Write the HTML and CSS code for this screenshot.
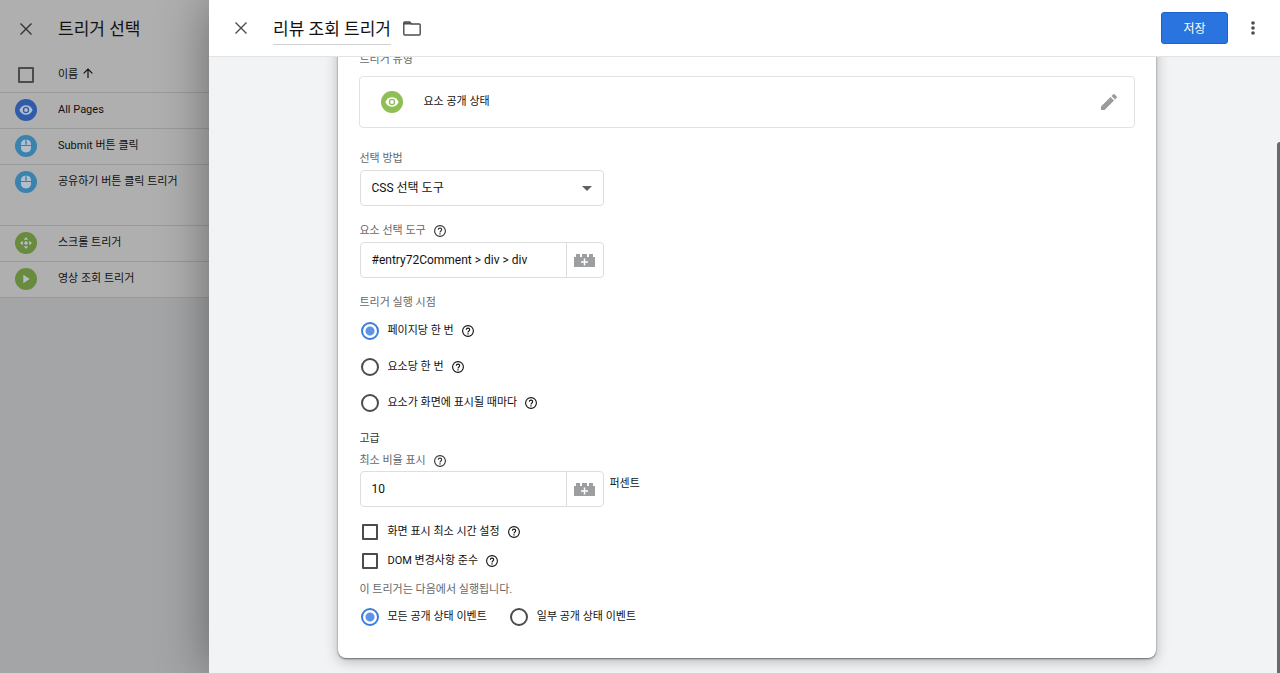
FILE: index.html
```html
<!DOCTYPE html>
<html lang="ko">
<head>
    <meta charset="UTF-8">
    <meta name="viewport" content="width=device-width, initial-scale=1.0">
    <title>리뷰 조회 트리거</title>
    <link rel="stylesheet" href="styles.css">
</head>
<body>

<!-- shared icons -->
<svg class="symbols" aria-hidden="true">
    <symbol id="close" viewBox="0 0 14 14">
        <path d="M1.5 1.5l11 11M12.5 1.5l-11 11" fill="none" stroke="currentColor" stroke-width="1.4"/>
    </symbol>
    <symbol id="help" viewBox="0 0 12 12">
        <circle cx="6" cy="6" r="5.4" fill="none" stroke="currentColor" stroke-width="1.1"/>
        <path d="M4.3 4.8c0-2.2 3.4-2.2 3.4 0 0 1.2-1.7 1.3-1.7 2.6" fill="none" stroke="currentColor" stroke-width="1.1"/>
        <path d="M5.4 8.2h1.2v1.2H5.4z" fill="currentColor"/>
    </symbol>
    <symbol id="eye" viewBox="0 0 22 22">
        <path d="M11 6.2c-3 0-5.500 1.900-6.600 4.800 1.100 2.900 3.600 4.800 6.600 4.800s5.500-1.900 6.600-4.800C16.500 8.100 14 6.200 11 6.200z" fill="currentColor"/>
        <circle class="icon-hole" cx="11" cy="11" r="3.200"/>
        <circle cx="11" cy="11" r="1.900" fill="currentColor"/>
    </symbol>
    <symbol id="mouse" viewBox="0 0 22 22">
        <path d="M10.500 4.500v5.500H6V9c0-2.500 2-4.400 4.500-4.500zM11.500 4.500C14 4.600 16 6.500 16 9v1h-4.500zM6 11h10v1.800c0 2.800-2.200 4.700-5 4.700s-5-1.900-5-4.700z" fill="currentColor"/>
        <path class="icon-wheel" d="M11 6.300v2.600"/>
    </symbol>
    <symbol id="scroll" viewBox="0 0 22 22">
        <circle cx="11" cy="11" r="1.800" fill="currentColor"/>
        <path d="M11 5l2.200 2.800H8.800zM11 17l2.200-2.800H8.800zM5 11l2.800-2.200v4.400zM17 11l-2.800-2.200v4.400z" fill="currentColor"/>
    </symbol>
    <symbol id="play" viewBox="0 0 22 22">
        <path d="M8.300 6.800v8.400l6.400-4.200z" fill="currentColor"/>
    </symbol>
    <symbol id="brick" viewBox="0 0 21 13">
        <path d="M0 3h2V0h4v3h2V0h5v3h2V0h4v3h2v10H0z" fill="currentColor"/>
        <path d="M10.500 4.500v7M7 8h7" stroke="#fff" stroke-width="1.500"/>
    </symbol>
</svg>

<div class="app">
    <aside class="picker">
        <header class="picker-header">
            <button class="icon-button" aria-label="닫기"><svg class="icon-close"><use href="#close"/></svg></button>
            <h2>트리거 선택</h2>
        </header>
        <table class="trigger-table">
            <thead>
                <tr>
                    <th class="icon-cell"><input type="checkbox" aria-label="모두 선택"></th>
                    <th>이름 <svg class="icon-sort" viewBox="0 0 10 10"><path d="M5 10V1M.7 5.300L5 1l4.300 4.300" fill="none" stroke="currentColor" stroke-width="1.200"/></svg></th>
                </tr>
            </thead>
            <tbody>
                <tr>
                    <td class="icon-cell"><svg class="badge blue"><use href="#eye"/></svg></td>
                    <td>All Pages</td>
                </tr>
                <tr>
                    <td class="icon-cell"><svg class="badge sky"><use href="#mouse"/></svg></td>
                    <td>Submit 버튼 클릭</td>
                </tr>
                <tr class="tall">
                    <td class="icon-cell"><svg class="badge sky"><use href="#mouse"/></svg></td>
                    <td>공유하기 버튼 클릭 트리거</td>
                </tr>
                <tr>
                    <td class="icon-cell"><svg class="badge olive"><use href="#scroll"/></svg></td>
                    <td>스크롤 트리거</td>
                </tr>
                <tr>
                    <td class="icon-cell"><svg class="badge olive"><use href="#play"/></svg></td>
                    <td>영상 조회 트리거</td>
                </tr>
            </tbody>
        </table>
    </aside>

    <main class="sheet">
        <header class="sheet-header">
            <button class="icon-button" aria-label="닫기"><svg class="icon-close"><use href="#close"/></svg></button>
            <h1>리뷰 조회 트리거</h1>
            <button class="icon-button folder" aria-label="폴더">
                <svg class="icon-folder" viewBox="0 0 18 15"><path d="M1.700 1h5l1.800 2h7.800q.9 0 .9.900v9.200q0 .9-.9.900H1.700q-.9 0-.9-.9V1.900Q.8 1 1.700 1z" fill="none" stroke="currentColor" stroke-width="1.400"/><path d="M1 1.500h6l1.500 2H1z" fill="currentColor"/></svg>
            </button>
            <button class="save">저장</button>
            <button class="icon-button" aria-label="더보기">
                <svg class="icon-more" viewBox="0 0 4 14"><circle cx="2" cy="2" r="1.800"/><circle cx="2" cy="7" r="1.800"/><circle cx="2" cy="12" r="1.800"/></svg>
            </button>
        </header>

        <div class="sheet-body">
            <form class="card">
                <p class="label">트리거 유형</p>
                <div class="trigger-type">
                    <svg class="badge green"><use href="#eye"/></svg>
                    <span>요소 공개 상태</span>
                    <button type="button" class="icon-button edit" aria-label="수정">
                        <svg class="icon-edit" viewBox="0 0 18 18"><path d="M1 13.500V17h3.500L14 7.500 10.500 4zM11.500 3L15 6.500l1.700-1.700q.6-.6 0-1.200l-2.300-2.300q-.6-.6-1.200 0z" fill="currentColor"/></svg>
                    </button>
                </div>

                <label class="label" for="method">선택 방법</label>
                <div class="select">
                    <select id="method"><option>CSS 선택 도구</option></select>
                    <svg class="icon-arrow" viewBox="0 0 10 5"><path d="M0 0h10L5 5z" fill="currentColor"/></svg>
                </div>

                <label class="label" for="selector">요소 선택 도구 <svg class="help"><use href="#help"/></svg></label>
                <div class="variable-input">
                    <input type="text" id="selector" value="#entry72Comment &gt; div &gt; div">
                    <button type="button" aria-label="변수 추가"><svg class="icon-brick"><use href="#brick"/></svg></button>
                </div>

                <p class="label">트리거 실행 시점</p>
                <label class="choice"><input type="radio" name="when" checked>페이지당 한 번 <svg class="help"><use href="#help"/></svg></label>
                <label class="choice"><input type="radio" name="when">요소당 한 번 <svg class="help"><use href="#help"/></svg></label>
                <label class="choice"><input type="radio" name="when">요소가 화면에 표시될 때마다 <svg class="help"><use href="#help"/></svg></label>

                <h3>고급</h3>
                <label class="label ratio-label" for="ratio">최소 비율 표시 <svg class="help"><use href="#help"/></svg></label>
                <div class="ratio">
                    <div class="variable-input">
                        <input type="text" id="ratio" value="10">
                        <button type="button" aria-label="변수 추가"><svg class="icon-brick"><use href="#brick"/></svg></button>
                    </div>
                    <span>퍼센트</span>
                </div>

                <div class="checks">
                    <label class="choice"><input type="checkbox">화면 표시 최소 시간 설정 <svg class="help"><use href="#help"/></svg></label>
                    <label class="choice"><input type="checkbox">DOM 변경사항 준수 <svg class="help"><use href="#help"/></svg></label>
                </div>

                <p class="label fires-on">이 트리거는 다음에서 실행됩니다.</p>
                <div class="events">
                    <label class="choice"><input type="radio" name="events" checked>모든 공개 상태 이벤트</label>
                    <label class="choice"><input type="radio" name="events">일부 공개 상태 이벤트</label>
                </div>
            </form>
        </div>
        <div class="scrollbar"></div>
    </main>
</div>

</body>
</html>
```
FILE: styles.css
```css
* {
    box-sizing: border-box;
}
body {
    margin: 0;
    font-family: Roboto, "Noto Sans CJK KR", sans-serif;
    font-size: 12px;
    line-height: 16px;
    color: #111;
}
h1, h2, h3, p {
    margin: 0;
    font-weight: normal;
}
button, input, select {
    font: inherit;
    color: inherit;
    margin: 0;
}
svg {
    display: block;
    flex: none;
}
.symbols {
    position: absolute;
    width: 0;
    height: 0;
}
.app {
    display: grid;
    grid-template-columns: 209px 1fr;
    height: 100vh;
    overflow: hidden;
}

/* Icons */
.icon-button {
    display: flex;
    align-items: center;
    justify-content: center;
    padding: 0;
    border: none;
    background: none;
    color: #4a4c4f;
    cursor: pointer;
}
.icon-close {
    width: 14px;
    height: 14px;
}
.icon-sort {
    display: inline-block;
    width: 10px;
    height: 10px;
    margin-left: 2px;
}
.icon-folder {
    width: 18px;
    height: 15px;
}
.icon-more {
    width: 4px;
    height: 14px;
    fill: currentColor;
}
.icon-edit {
    width: 18px;
    height: 18px;
}
.icon-brick {
    width: 21px;
    height: 13px;
}
.help {
    width: 12px;
    height: 12px;
}
.badge {
    width: 22px;
    height: 22px;
    border-radius: 50%;
    background: var(--badge);
    color: #b3bdcc;
}
.icon-hole {
    fill: var(--badge);
}
.icon-wheel {
    stroke: var(--badge);
    stroke-width: 1;
}
.blue {
    --badge: #2f5ba9;
}
.sky {
    --badge: #3b82ae;
}
.olive {
    --badge: #698b3d;
}
.green {
    --badge: #8fbe55;
    color: #fff;
}

/* Trigger list behind the sheet */
.picker {
    background: #a3a5a7;
}
.picker-header {
    display: flex;
    align-items: center;
    height: 56px;
    padding: 1px 0 0 19px;
    gap: 25px;
    background: #afafaf;
}
.picker-header .icon-button {
    width: 14px;
    color: #333;
}
.picker h2 {
    font-size: 17px;
    line-height: 24px;
}
.trigger-table {
    width: 100%;
    border-collapse: collapse;
    background: #afafaf;
    font-size: 11px;
}
.trigger-table tr {
    height: 36px;
    border-bottom: 1px solid #999a9b;
}
.trigger-table th, .trigger-table td {
    padding: 0 0 0 6px;
    font-weight: normal;
    text-align: left;
    white-space: nowrap;
}
.trigger-table th {
    padding-top: 2px;
}
.trigger-table .icon-cell {
    width: 52px;
    padding-left: 15px;
}
.trigger-table .tall {
    height: 61px;
}
.trigger-table .tall td {
    padding-top: 9px;
    vertical-align: top;
}
.trigger-table .tall .icon-cell {
    padding-top: 6px;
}

/* Tick boxes and radios */
input[type="checkbox"], input[type="radio"] {
    appearance: none;
    flex: none;
    display: block;
    border: 2px solid #4a4c4f;
}
input[type="checkbox"] {
    width: 16px;
    height: 16px;
    border-radius: 1px;
}
.icon-cell input[type="checkbox"] {
    margin-left: 3px;
}
input[type="radio"] {
    width: 18px;
    height: 18px;
    border-radius: 50%;
}
input[type="radio"]:checked {
    border-color: #3b7ddd;
    background: radial-gradient(circle, #5c92e8 4px, #fff 5px);
}

/* Sheet */
.sheet {
    position: relative;
    display: flex;
    flex-direction: column;
    min-width: 0;
    min-height: 0;
    background: #f1f3f4;
    box-shadow: 0 0 48px rgba(0, 0, 0, 0.4);
}
.sheet-header {
    position: relative;
    display: flex;
    flex: none;
    align-items: center;
    height: 57px;
    padding: 0 22px 0 25px;
    background: #fff;
    border-bottom: 1px solid #e2e3e4;
}
.sheet h1 {
    margin-left: 25px;
    padding: 5px 0 3px;
    font-size: 17px;
    line-height: 24px;
    border-bottom: 1px solid #d0d1d2;
}
.folder {
    margin-left: 12px;
}
.save {
    width: 67px;
    height: 32px;
    margin: 0 20px 0 auto;
    padding: 1px 0 0;
    border: 1px solid #1b62c9;
    border-radius: 3px;
    background: #2a74e0;
    color: #fff;
    cursor: pointer;
}
.sheet-header .icon-button:last-child {
    width: 10px;
}
.sheet-body {
    display: flex;
    flex: 1;
    align-items: flex-end;
    justify-content: center;
    min-height: 0;
    padding: 0 20px 15px 24px;
    overflow: hidden;
}
.scrollbar {
    position: absolute;
    top: 142px;
    right: 0;
    bottom: 0;
    width: 3px;
    border-radius: 3px 0 0 0;
    background: #696a6b;
}

/* Form card */
.card {
    width: 100%;
    max-width: 818px;
    padding: 20px 21px 24px;
    background: #fff;
    border-radius: 8px;
    box-shadow: 0 1px 2px rgba(0, 0, 0, 0.5), 0 3px 14px rgba(0, 0, 0, 0.25);
}
.label {
    display: flex;
    align-items: center;
    gap: 8px;
    margin: 17px 0 3px 1px;
    font-size: 11px;
    color: #66686b;
}
.label .help {
    color: #333;
}
p.label {
    margin-bottom: 2px;
}
.trigger-type {
    display: flex;
    align-items: center;
    height: 52px;
    margin-bottom: 23px;
    padding: 0 16px 0 21px;
    margin-top: 8px;
    border: 1px solid #e0e2e3;
    border-radius: 4px;
}
.trigger-type span {
    margin-left: 21px;
    font-size: 11px;
}
.edit {
    margin-left: auto;
    color: #9a9b9c;
}
.select, .variable-input {
    width: 244px;
    height: 36px;
    margin-left: 1px;
    border: 1px solid #dcdedf;
    border-radius: 4px;
}
.select {
    position: relative;
}
.select select {
    width: 100%;
    height: 100%;
    padding: 0 11px;
    border: none;
    background: none;
    appearance: none;
}
.icon-arrow {
    position: absolute;
    top: 15px;
    right: 11px;
    width: 10px;
    height: 5px;
    color: #606163;
    pointer-events: none;
}
.variable-input {
    display: flex;
}
.variable-input input {
    flex: 1;
    min-width: 0;
    padding: 0 11px;
    border: none;
    background: none;
}
.variable-input button {
    display: flex;
    align-items: center;
    justify-content: center;
    width: 37px;
    padding: 0;
    border: none;
    border-left: 1px solid #dcdedf;
    background: none;
    color: #9d9e9f;
}
.choice {
    display: flex;
    align-items: center;
    height: 36px;
    padding-left: 2px;
    font-size: 11px;
}
.choice input {
    margin-right: 9px;
}
.choice .help {
    margin-left: 8px;
}
.card h3 {
    margin: 10px 0 0 1px;
    font-size: 11px;
    color: #333;
}
.label.ratio-label {
    margin-top: 6px;
    margin-bottom: 2px;
}
.ratio {
    display: flex;
    gap: 6px;
}
.ratio span {
    margin-top: 5px;
    font-size: 11px;
}
.checks {
    margin-top: 10px;
}
.checks .choice {
    height: 29px;
    padding-left: 3px;
}
.checks .choice input {
    margin-right: 10px;
}
.label.fires-on {
    margin-top: 7px;
}
.events {
    display: flex;
    gap: 21px;
}
.events .choice {
    height: 34px;
}
```
